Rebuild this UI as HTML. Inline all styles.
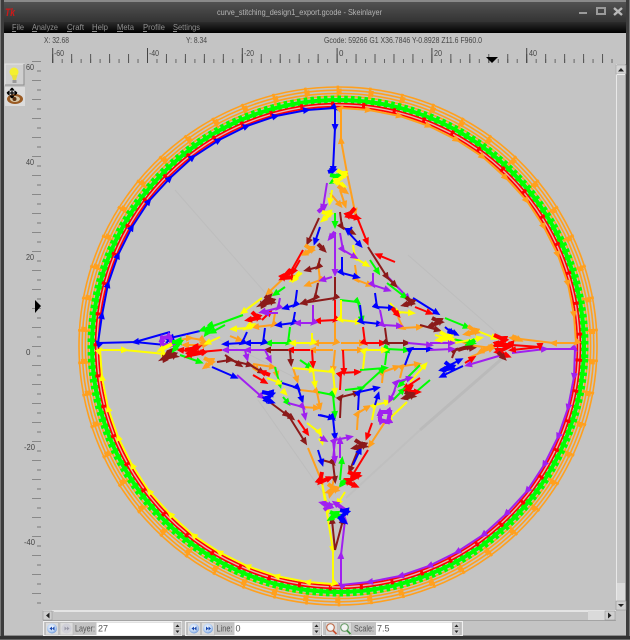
<!DOCTYPE html>
<html><head><meta charset="utf-8"><title>Skeinlayer</title>
<style>
html,body{margin:0;padding:0;background:#c4c4c4;width:630px;height:640px;overflow:hidden}
svg{display:block;position:absolute;left:0;top:0}
text{font-family:"Liberation Sans",sans-serif}
g.l{fill:none;stroke-width:2;stroke-linejoin:miter}
g.b{stroke:#0000ff;marker-mid:url(#mb);marker-end:url(#mb)}
g.r{stroke:#ff0000;marker-mid:url(#mr);marker-end:url(#mr)}
g.g{stroke:#00ff00;marker-mid:url(#mg);marker-end:url(#mg)}
g.y{stroke:#ffff00;marker-mid:url(#my);marker-end:url(#my)}
g.o{stroke:#ffa01e;marker-mid:url(#mo);marker-end:url(#mo)}
g.p{stroke:#a020f0;marker-mid:url(#mp);marker-end:url(#mp)}
g.w{stroke:#8b1a1a;marker-mid:url(#mw);marker-end:url(#mw)}
g.bl{stroke-width:4}
</style></head><body>
<svg width="630" height="640" viewBox="0 0 630 640" xmlns="http://www.w3.org/2000/svg">
<defs>
<linearGradient id="tb" x1="0" y1="0" x2="0" y2="1"><stop offset="0" stop-color="#555"/><stop offset="1" stop-color="#333"/></linearGradient>
<linearGradient id="mn" x1="0" y1="0" x2="0" y2="1"><stop offset="0" stop-color="#2c2c2c"/><stop offset="1" stop-color="#000"/></linearGradient>
<radialGradient id="bi" cx=".45" cy=".4" r=".7"><stop offset="0" stop-color="#fff"/><stop offset=".55" stop-color="#bcd4f4"/><stop offset="1" stop-color="#4a7fd0"/></radialGradient>
<marker id="mb" markerUnits="userSpaceOnUse" markerWidth="8" markerHeight="8" refX="4" refY="4" orient="auto"><path d="M0 .5L8 4L0 7.5z" fill="#0000ff"/></marker>
<marker id="mr" markerUnits="userSpaceOnUse" markerWidth="8" markerHeight="8" refX="4" refY="4" orient="auto"><path d="M0 .5L8 4L0 7.5z" fill="#ff0000"/></marker>
<marker id="mg" markerUnits="userSpaceOnUse" markerWidth="8" markerHeight="8" refX="4" refY="4" orient="auto"><path d="M0 .5L8 4L0 7.5z" fill="#00ff00"/></marker>
<marker id="my" markerUnits="userSpaceOnUse" markerWidth="8" markerHeight="8" refX="4" refY="4" orient="auto"><path d="M0 .5L8 4L0 7.5z" fill="#ffff00"/></marker>
<marker id="mo" markerUnits="userSpaceOnUse" markerWidth="8" markerHeight="8" refX="4" refY="4" orient="auto"><path d="M0 .5L8 4L0 7.5z" fill="#ffa01e"/></marker>
<marker id="mp" markerUnits="userSpaceOnUse" markerWidth="8" markerHeight="8" refX="4" refY="4" orient="auto"><path d="M0 .5L8 4L0 7.5z" fill="#a020f0"/></marker>
<marker id="mw" markerUnits="userSpaceOnUse" markerWidth="8" markerHeight="8" refX="4" refY="4" orient="auto"><path d="M0 .5L8 4L0 7.5z" fill="#8b1a1a"/></marker>
</defs>

<!-- window chrome -->
<rect width="630" height="640" fill="#c4c4c4"/>
<rect width="630" height="22" fill="url(#tb)"/>
<rect width="630" height="2" fill="#8a8a8a"/>
<rect y="22" width="630" height="11" fill="url(#mn)"/>
<rect x="0" y="0" width="4" height="640" fill="#3c3c3c"/>
<rect x="0" y="0" width="1" height="640" fill="#777"/>
<rect x="626" y="0" width="4" height="640" fill="#3c3c3c"/>
<rect x="629" y="0" width="1" height="640" fill="#777"/>
<rect x="0" y="636" width="630" height="4" fill="#333"/>
<rect x="4" y="635" width="622" height="1" fill="#8a8a8a"/>
<rect x="0" y="639" width="630" height="1" fill="#666"/>

<text x="5" y="16" font-size="11" font-weight="bold" font-style="italic" fill="#d01818" textLength="10" lengthAdjust="spacingAndGlyphs">Tk</text>

<text x="217" y="15" font-size="8.5" fill="#b4b4b4" textLength="165" lengthAdjust="spacingAndGlyphs">curve_stitching_design1_export.gcode - Skeinlayer</text>
<rect x="579" y="12" width="8" height="2" fill="#9a9a9a"/>
<rect x="597" y="8" width="8" height="6" fill="none" stroke="#9a9a9a" stroke-width="2"/>
<path d="M614 8L622 15M622 8L614 15" stroke="#b8b8b8" stroke-width="2.4" fill="none"/>

<g font-size="8.5" fill="#8f8f8f">
<text x="12" y="30" textLength="12" lengthAdjust="spacingAndGlyphs">File</text>
<text x="32" y="30" textLength="26" lengthAdjust="spacingAndGlyphs">Analyze</text>
<text x="67" y="30" textLength="17" lengthAdjust="spacingAndGlyphs">Craft</text>
<text x="92" y="30" textLength="16" lengthAdjust="spacingAndGlyphs">Help</text>
<text x="117" y="30" textLength="17" lengthAdjust="spacingAndGlyphs">Meta</text>
<text x="143" y="30" textLength="22" lengthAdjust="spacingAndGlyphs">Profile</text>
<text x="173" y="30" textLength="27" lengthAdjust="spacingAndGlyphs">Settings</text>
</g>
<path d="M12 31.500h4M32 31.500h5M67 31.500h5M92 31.500h5M117 31.500h6M143 31.500h4M173 31.500h4" stroke="#8f8f8f" stroke-width="1"/>

<g font-size="8.5" fill="#444">
<text x="44" y="43" textLength="25" lengthAdjust="spacingAndGlyphs">X: 32.68</text>
<text x="186" y="43" textLength="21" lengthAdjust="spacingAndGlyphs">Y: 8.34</text>
<text x="324" y="43" textLength="158" lengthAdjust="spacingAndGlyphs">Gcode: 59266 G1 X36.7846 Y-0.8928 Z11.6 F960.0</text>
</g>

<!-- top ruler -->
<line x1="52.2" y1="61" x2="615" y2="61" stroke="#666" stroke-width="4" stroke-dasharray="1 8.48"/>
<line x1="52.2" y1="58.5" x2="615" y2="58.5" stroke="#555" stroke-width="9" stroke-dasharray="1 17.96"/>
<line x1="52.2" y1="55.5" x2="615" y2="55.5" stroke="#444" stroke-width="15" stroke-dasharray="1 93.8"/>
<g font-size="8" fill="#444">
<text x="54" y="56" textLength="10" lengthAdjust="spacingAndGlyphs">-60</text>
<text x="149" y="56" textLength="10" lengthAdjust="spacingAndGlyphs">-40</text>
<text x="244" y="56" textLength="10" lengthAdjust="spacingAndGlyphs">-20</text>
<text x="339" y="56" textLength="4">0</text>
<text x="434" y="56" textLength="8" lengthAdjust="spacingAndGlyphs">20</text>
<text x="529" y="56" textLength="8" lengthAdjust="spacingAndGlyphs">40</text>
</g>
<polygon points="486,57 498,57 492,63" fill="#000"/>

<!-- left ruler -->
<line x1="39" y1="61" x2="39" y2="604" stroke="#777" stroke-width="4" stroke-dasharray="1 18" stroke-dashoffset="-9.5"/>
<line x1="36.500" y1="61" x2="36.500" y2="604" stroke="#888" stroke-width="9" stroke-dasharray="1 18"/>
<g font-size="8" fill="#444">
<text x="26" y="70" textLength="8" lengthAdjust="spacingAndGlyphs">60</text>
<text x="26" y="165" textLength="8" lengthAdjust="spacingAndGlyphs">40</text>
<text x="26" y="260" textLength="8" lengthAdjust="spacingAndGlyphs">20</text>
<text x="26" y="355" textLength="4">0</text>
<text x="24" y="450" textLength="11" lengthAdjust="spacingAndGlyphs">-20</text>
<text x="24" y="545" textLength="11" lengthAdjust="spacingAndGlyphs">-40</text>
</g>
<polygon points="35,300 41,306 35,313" fill="#000"/>

<!-- side buttons -->
<rect x="5" y="64" width="19" height="21" fill="#cfcfcf" stroke="#e4e4e4"/>
<path d="M24 64V85H5" fill="none" stroke="#8e8e8e"/>
<circle cx="14" cy="72" r="4.500" fill="#f4f030"/>
<path d="M11.500 75L13 80H16L17.500 75z" fill="#e8e040"/>
<rect x="12.500" y="80" width="4" height="3" fill="#999"/>
<rect x="5" y="87" width="20" height="19" fill="#dcdcdc"/>
<ellipse cx="15" cy="99" rx="8" ry="5" fill="#9a5a22"/>
<ellipse cx="15" cy="99" rx="5" ry="3" fill="#d8c8a8"/>
<circle cx="14.500" cy="99" r="2" fill="#5a3010"/>
<path d="M12 88V98M7 93H17M12 88L10 90.500M12 88L14 90.500M7 93L9.500 91M7 93L9.500 95M17 93L14.500 91M17 93L14.500 95M12 98L10 95.500M12 98L14 95.500" stroke="#000" stroke-width="1.2" fill="none"/>

<!-- faint background shadows -->
<g fill="none" stroke-width="1" stroke="#bdbdbd">
<line x1="505" y1="356" x2="420" y2="430" stroke-width="3" stroke="#bababa"/>
<line x1="420" y1="430" x2="346" y2="498" stroke-width="2" stroke="#bfbfbf"/>
<line x1="175" y1="190" x2="268" y2="296"/>
<line x1="408" y1="255" x2="505" y2="340"/>
<line x1="258" y1="400" x2="335" y2="510"/>
<line x1="200" y1="330" x2="300" y2="380"/>
</g>

<!-- rings -->
<g fill="none" transform="rotate(3 338 346)">
<circle cx="338" cy="346" r="259" stroke="#ffa01e" stroke-width="1.6"/>
<circle cx="338" cy="346" r="255.8" stroke="#ffa01e" stroke-width="1.6"/>
<circle cx="338" cy="346" r="252.6" stroke="#ffa01e" stroke-width="1.6"/>
<circle cx="338" cy="346" r="249.8" stroke="#ffa01e" stroke-width="1.6"/>
<circle cx="338" cy="346" r="254.4" stroke="#ffa01e" stroke-width="12" stroke-dasharray="2.5 29.5"/>
<circle cx="338" cy="346" r="254.4" stroke="#ffa01e" stroke-width="6" stroke-dasharray="5 27"/>
<circle cx="338" cy="346" r="246" stroke="#00ff00" stroke-width="4"/>
<circle cx="338" cy="346" r="246" stroke="#00ff00" stroke-width="9" stroke-dasharray="3.500 3.200"/>
<circle cx="338" cy="346" r="240.8" stroke="#e8b0b0" stroke-width="3"/>
<circle cx="338" cy="346" r="242.4" stroke="#ff0000" stroke-width="1.6"/>
<circle cx="338" cy="346" r="239.4" stroke="#ff0000" stroke-width="1.6"/>
<circle cx="338" cy="346" r="241" stroke="#ff0000" stroke-width="7" stroke-dasharray="3 28"/>
</g>

<!-- perimeter -->
<g class="l b">
<polyline points="170,332 135,342 98,343 102,315 108,284 118,255 132,227 149,201 170,178 193,157 219,140 247,126 276,116 307,110 335,108 335,128 333,170"/>
<polyline points="200,331 170,338"/>
<polyline points="135,342 165,345 170,338"/>
</g>
<g class="l y">
<polyline points="322,483 333,550 333,584 307,582 276,576 247,566 219,552 193,535 170,514 149,491 132,465 118,437 108,408 102,377 100,350 125,350 165,354"/>
</g>
<g class="l p">
<polyline points="512,353 545,349 575,349 574,377 568,408 558,437 544,465 527,491 506,514 483,535 457,552 429,566 400,576 369,582 341,585 341,555 345,520"/>
</g>
<g class="l o">
<polyline points="347,173 341,140 341,108 369,110 400,116 429,126 457,140 483,157 506,178 527,201 544,227 558,255 568,284 574,315 576,343 553,343 512,338"/>
</g>
<g class="l r"><polyline points="512,345 540,347 512,350"/></g>

<!-- envelope -->
<g class="l p"><polyline points="327,183 323,208"/><polyline points="388,277 408,298"/><polyline points="237,375 262,397"/><polyline points="502,355 468,365"/></g>
<g class="l w"><polyline points="319,218 308,242"/><polyline points="368,247 387,277"/><polyline points="263,397 287,415"/><polyline points="290,418 305,442"/><polyline points="335,550 343,520"/><polyline points="335,550 332,520"/></g>
<g class="l r"><polyline points="303,250 290,273"/><polyline points="355,212 367,242"/><polyline points="368,450 352,476"/></g>
<g class="l o"><polyline points="285,277 268,293"/><polyline points="347,173 355,212"/><polyline points="308,448 322,482"/><polyline points="385,422 370,445"/></g>
<g class="l y"><polyline points="262,298 243,312"/><polyline points="407,402 388,420"/><polyline points="475,330 495,338"/><polyline points="322,483 328,510"/></g>
<g class="l b"><polyline points="413,298 437,313"/><polyline points="212,367 235,377"/><polyline points="463,366 442,376"/></g>
<g class="l g"><polyline points="243,315 202,330"/><polyline points="445,318 467,327"/><polyline points="430,380 410,397"/><polyline points="180,355 200,362"/></g>

<!-- stitch grid -->
<g class="l o">
<polyline points="335,322 335,343 315,343"/><polyline points="341,343 363,343"/>
<polyline points="333,350 312,350"/><polyline points="341,350 361,350"/>
<polyline points="335,350 333,370"/><polyline points="253,364 273,367"/>
<polyline points="318,263 320,280 307,285"/><polyline points="355,265 357,280 370,285"/>
<polyline points="398,317 403,328 420,327"/><polyline points="300,390 317,392 320,407"/>
<polyline points="293,368 297,380"/><polyline points="275,313 273,325 255,327"/>
<polyline points="400,378 403,366 418,364"/><polyline points="253,364 257,370"/>
<polyline points="275,368 277,375"/><polyline points="382,383 383,372 397,367"/>
<polyline points="468,345 492,348"/><polyline points="468,358 492,348"/>
<polyline points="180,340 190,338 203,340 205,345 185,345"/>
<polyline points="330,193 340,205"/><polyline points="335,475 330,495"/>
<polyline points="357,430 358,413 368,407"/><polyline points="302,407 317,408"/>
<polyline points="202,338 203,345"/><polyline points="452,338 470,345"/>
<polyline points="340,190 345,205"/><polyline points="230,336 240,340"/>
</g>
<g class="l r">
<polyline points="335,300 335,320 317,321"/><polyline points="363,327 365,343 383,343"/>
<polyline points="310,350 290,350"/><polyline points="312,350 313,365"/>
<polyline points="222,350 200,352 180,350"/><polyline points="340,390 341,373 358,372"/>
<polyline points="253,375 265,382"/><polyline points="298,420 307,433"/>
<polyline points="343,350 344,372"/><polyline points="415,307 430,313"/>
<polyline points="372,423 367,437"/><polyline points="465,363 473,358"/>
<polyline points="300,260 293,272"/><polyline points="420,378 405,388"/>
<polyline points="395,262 378,255"/><polyline points="262,320 270,312"/>
</g>
<g class="l w">
<polyline points="335,277 335,298 303,303"/><polyline points="385,328 387,343 407,343"/>
<polyline points="288,350 267,350"/><polyline points="217,362 230,360 250,365"/>
<polyline points="340,212 342,227 353,233"/><polyline points="320,258 318,267 307,270"/>
<polyline points="290,350 291,363"/><polyline points="340,418 341,397 357,393"/>
<polyline points="452,358 455,350 473,348"/><polyline points="322,460 333,463 335,480"/>
<polyline points="318,283 315,298 303,303"/><polyline points="420,325 438,330"/>
<polyline points="250,365 262,372"/><polyline points="225,355 240,365"/>
<polyline points="360,445 350,470"/><polyline points="385,275 395,285"/>
</g>
<g class="l g">
<polyline points="335,213 335,225"/><polyline points="340,300 358,302 362,320"/>
<polyline points="290,327 288,343 268,343"/><polyline points="387,283 405,297"/>
<polyline points="385,345 387,349 407,350"/><polyline points="452,339 473,343"/>
<polyline points="360,370 385,368"/><polyline points="385,365 387,349"/>
<polyline points="318,392 333,395 335,415"/><polyline points="275,367 280,385"/>
<polyline points="345,390 362,388 383,369"/><polyline points="340,480 342,460"/>
<polyline points="283,397 288,403"/><polyline points="393,400 403,390"/>
<polyline points="370,260 378,272"/><polyline points="285,287 275,294"/><polyline points="420,365 400,385"/>
<polyline points="225,325 212,332"/><polyline points="300,360 310,367"/>
</g>
<g class="l y">
<polyline points="341,300 341,320 359,322"/><polyline points="312,333 312,343 292,343"/>
<polyline points="293,368 313,370 333,372 335,392"/><polyline points="313,370 315,385"/>
<polyline points="353,245 355,258 367,265"/><polyline points="390,303 398,312 412,313"/>
<polyline points="363,369 365,350 385,350"/><polyline points="372,420 375,405 388,402"/>
<polyline points="332,190 330,202"/><polyline points="253,318 247,328 233,329"/>
<polyline points="267,378 280,383"/><polyline points="243,330 253,325"/>
<polyline points="410,382 425,365"/><polyline points="435,335 452,340"/>
<polyline points="455,343 480,338"/><polyline points="345,492 338,503"/>
<polyline points="220,337 207,343"/><polyline points="307,423 320,433 322,442"/>
<polyline points="282,390 285,393"/><polyline points="302,273 292,280"/>
</g>
<g class="l b">
<polyline points="360,305 362,322 380,324"/><polyline points="295,312 293,323 278,325"/>
<polyline points="265,328 263,343 247,343"/><polyline points="247,332 242,343 225,344"/>
<polyline points="342,257 342,273 357,277"/><polyline points="375,293 377,307 392,308"/>
<polyline points="352,227 348,232 360,245"/><polyline points="320,227 315,242"/>
<polyline points="405,365 411,349 430,349"/><polyline points="282,383 298,388 302,400"/>
<polyline points="358,410 359,392 377,388"/><polyline points="318,450 322,463"/>
<polyline points="353,465 360,450"/><polyline points="318,415 333,418 335,437"/>
<polyline points="297,290 295,305 285,308"/><polyline points="440,370 460,360"/>
<polyline points="445,327 452,333"/><polyline points="320,415 332,418"/>
<polyline points="375,405 378,395"/>
</g>
<g class="l p">
<polyline points="335,232 335,273"/><polyline points="313,305 313,323 297,323"/>
<polyline points="265,350 247,350 225,350"/><polyline points="408,343 430,345"/>
<polyline points="380,310 383,325 400,326"/><polyline points="340,233 343,250 355,257"/>
<polyline points="373,273 373,285 388,290"/><polyline points="430,343 452,343"/>
<polyline points="430,350 452,349"/><polyline points="333,460 335,440 350,437"/>
<polyline points="340,458 340,440"/><polyline points="393,395 397,382 410,378"/>
<polyline points="288,403 303,407 305,417"/><polyline points="245,350 247,358"/><polyline points="265,350 270,360"/>
<polyline points="332,277 322,280"/><polyline points="280,298 278,308 262,312"/>
<polyline points="320,437 325,440"/><polyline points="395,390 390,400"/>
<polyline points="278,313 265,313"/><polyline points="333,440 335,460"/>
</g>

<!-- dense clusters -->
<g class="l r bl">
<polyline points="494,335 505,340 497,345 512,345 498,352 508,356"/>
<polyline points="355,208 348,216 358,218"/>
<polyline points="290,270 283,278 295,277"/>
<polyline points="322,472 320,482 330,478"/>
<polyline points="348,472 358,476 347,482 356,486"/>
<polyline points="412,384 408,392 418,392"/>
<polyline points="252,312 258,318 248,320"/>
<polyline points="185,350 197,348 190,355 205,352"/>
<polyline points="270,375 262,372"/><polyline points="392,308 398,315"/>
</g>
<g class="l w bl">
<polyline points="265,296 272,302 262,304 270,296"/>
<polyline points="166,352 174,356 164,358 172,350"/>
<polyline points="406,297 412,303 404,305"/>
<polyline points="432,318 440,322 430,326"/>
<polyline points="405,392 412,396 404,398"/>
<polyline points="355,440 364,446 354,448"/>
<polyline points="318,244 324,250"/>
<polyline points="284,412 292,418"/><polyline points="498,352 504,358"/>
<polyline points="458,350 470,346"/>
</g>
<g class="l p bl">
<polyline points="160,338 170,337 172,345 162,345 162,338"/>
<polyline points="380,412 390,412 388,422 380,420 380,412"/>
<polyline points="324,510 330,505 322,503"/>
<polyline points="345,510 335,503"/>
<polyline points="318,212 325,206"/>
<polyline points="335,232 330,238"/>
</g>
<g class="l b bl">
<polyline points="340,510 347,512 340,518 345,522"/>
<polyline points="262,392 272,394 266,400 272,402"/>
<polyline points="445,362 452,368 442,370"/><polyline points="448,330 456,334"/>
<polyline points="328,172 334,170"/>
</g>
<g class="l g bl">
<polyline points="330,175 340,177 332,182"/>
<polyline points="330,512 337,515 330,519"/>
<polyline points="205,330 212,326 206,334"/>
<polyline points="172,342 180,342 174,350"/>
<polyline points="475,340 468,344"/><polyline points="345,480 341,485"/>
</g>
<g class="l y bl">
<polyline points="337,170 345,175 336,182 344,186"/>
<polyline points="322,212 330,214 323,220"/>
<polyline points="300,272 294,280"/><polyline points="440,332 450,338 438,340"/>
<polyline points="172,344 160,350"/>
</g>
<g class="l o bl">
<polyline points="305,245 312,250 304,254"/>
<polyline points="204,358 212,362 205,367"/>
<polyline points="468,326 476,332 466,334"/>
<polyline points="328,484 336,490 328,492"/>
<polyline points="338,186 346,192"/><polyline points="493,345 480,352"/>
<polyline points="512,336 520,340"/>
</g>

<!-- vertical scrollbar -->
<rect x="616" y="64" width="10" height="546" fill="#c4c4c4"/>
<rect x="616" y="64" width="1" height="546" fill="#e8e8e8"/>
<rect x="625" y="64" width="1" height="546" fill="#a0a0a0"/>
<rect x="616" y="65" width="10" height="9" fill="#d4d4d4" stroke="#9a9a9a" stroke-width=".5"/>
<polygon points="618,71.500 624,71.500 621,68" fill="#222"/>
<rect x="617" y="74" width="8" height="1" fill="#eee"/>
<rect x="617" y="583" width="8" height="18" fill="#dadada"/>
<rect x="616" y="601" width="10" height="9" fill="#cfcfcf" stroke="#8e8e8e" stroke-width=".5"/>
<polygon points="618,604 624,604 621,607" fill="#222"/>

<!-- horizontal scrollbar -->
<rect x="43" y="610" width="573" height="11" fill="#c4c4c4"/>
<rect x="43" y="610" width="573" height="1" fill="#e4e4e4"/>
<rect x="43" y="620" width="573" height="1" fill="#a4a4a4"/>
<rect x="43" y="611" width="9" height="9" fill="#cfcfcf" stroke="#8e8e8e" stroke-width=".5"/>
<polygon points="49.500,612.500 49.500,618.500 46,615.500" fill="#222"/>
<rect x="54" y="611" width="534" height="1" fill="#e4e4e4"/>
<rect x="588" y="611" width="17" height="9" fill="#dadada"/>
<rect x="605" y="611" width="10" height="9" fill="#cfcfcf" stroke="#8e8e8e" stroke-width=".5"/>
<polygon points="608,612.500 608,618.500 611.500,615.500" fill="#222"/>

<!-- bottom toolbar -->
<g fill="#c4c4c4" stroke="#f0f0f0">
<rect x="43.500" y="621.500" width="138" height="14"/>
<rect x="185.500" y="621.500" width="135" height="14"/>
<rect x="322.500" y="621.500" width="140" height="14"/>
</g>
<g fill="#dcdcdc" stroke="#b4b4b4" stroke-width=".6">
<rect x="45.500" y="622.500" width="13" height="12.500"/><rect x="60" y="622.500" width="13" height="12.500"/>
<rect x="187.500" y="622.500" width="13" height="12.500"/><rect x="201.500" y="622.500" width="13" height="12.500"/>
<rect x="325.500" y="622.500" width="12" height="12.500"/><rect x="339.500" y="622.500" width="12" height="12.500"/>
</g>
<circle cx="52" cy="628.500" r="5" fill="url(#bi)"/>
<circle cx="66.500" cy="628.500" r="5" fill="#d0d0d8"/>
<circle cx="194" cy="628.500" r="5" fill="url(#bi)"/>
<circle cx="208" cy="628.500" r="5" fill="url(#bi)"/>
<path d="M52 626.500L49.500 628.500L52 630.500zM54.500 626.500L52 628.500L54.500 630.500z" fill="#1848b0"/>
<path d="M64.500 626.500L67 628.500L64.500 630.500zM67 626.500L69.500 628.500L67 630.500z" fill="#9a9aa8"/>
<path d="M194 626.500L191.500 628.500L194 630.500zM196.500 626.500L194 628.500L196.500 630.500z" fill="#1848b0"/>
<path d="M206 626.500L208.500 628.500L206 630.500zM208.500 626.500L211 628.500L208.500 630.500z" fill="#1848b0"/>
<circle cx="330.500" cy="627.500" r="3.800" fill="#f4f4f4" stroke="#c07050" stroke-width="1.200"/>
<path d="M333 630.500L336.500 634" stroke="#c85030" stroke-width="1.800"/>
<circle cx="344.500" cy="627.500" r="3.800" fill="#f4f4f4" stroke="#70a070" stroke-width="1.200"/>
<path d="M347 630.500L350.500 634" stroke="#409040" stroke-width="1.800"/>
<g font-size="9" fill="#555">
<text x="75" y="631.500" textLength="20" lengthAdjust="spacingAndGlyphs">Layer:</text>
<text x="216.500" y="631.500" textLength="16" lengthAdjust="spacingAndGlyphs">Line:</text>
<text x="354" y="631.500" textLength="20" lengthAdjust="spacingAndGlyphs">Scale:</text>
</g>
<g fill="#fff">
<rect x="96.500" y="622.500" width="77" height="12.500"/>
<rect x="234.500" y="622.500" width="78" height="12.500"/>
<rect x="376" y="622.500" width="76" height="12.500"/>
</g>
<g font-size="9" fill="#555">
<text x="98" y="631.500">27</text>
<text x="235.500" y="631.500">0</text>
<text x="377" y="631.500">7.5</text>
</g>
<g fill="#d0d0d0" stroke="#a8a8a8" stroke-width=".5">
<rect x="174" y="622.500" width="7" height="6"/><rect x="174" y="628.500" width="7" height="6.500"/>
<rect x="313" y="622.500" width="7" height="6"/><rect x="313" y="628.500" width="7" height="6.500"/>
<rect x="453" y="622.500" width="7" height="6"/><rect x="453" y="628.500" width="7" height="6.500"/>
</g>
<path d="M175.500 627L177.500 624.500L179.500 627zM175.500 630.500L177.500 633L179.500 630.500zM314.500 627L316.500 624.500L318.500 627zM314.500 630.500L316.500 633L318.500 630.500zM454.500 627L456.500 624.500L458.500 627zM454.500 630.500L456.500 633L458.500 630.500z" fill="#222"/>
</svg>
</body></html>
